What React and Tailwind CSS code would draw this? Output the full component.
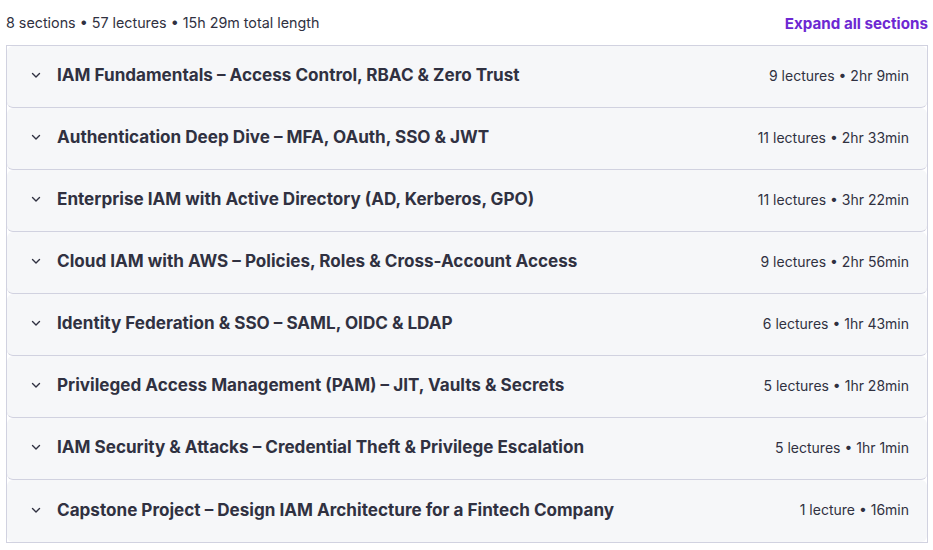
const sections = [
  { title: "IAM Fundamentals – Access Control, RBAC & Zero Trust", meta: "9 lectures • 2hr 9min" },
  { title: "Authentication Deep Dive – MFA, OAuth, SSO & JWT", meta: "11 lectures • 2hr 33min" },
  { title: "Enterprise IAM with Active Directory (AD, Kerberos, GPO)", meta: "11 lectures • 3hr 22min" },
  { title: "Cloud IAM with AWS – Policies, Roles & Cross-Account Access", meta: "9 lectures • 2hr 56min" },
  { title: "Identity Federation & SSO – SAML, OIDC & LDAP", meta: "6 lectures • 1hr 43min" },
  { title: "Privileged Access Management (PAM) – JIT, Vaults & Secrets", meta: "5 lectures • 1hr 28min" },
  { title: "IAM Security & Attacks – Credential Theft & Privilege Escalation", meta: "5 lectures • 1hr 1min" },
  { title: "Capstone Project – Design IAM Architecture for a Fintech Company", meta: "1 lecture • 16min" },
];

function Chevron() {
  return (
    <svg width="12" height="12" viewBox="0 0 12 12" fill="none" className="shrink-0">
      <path d="M2.5 4.5 6 8l3.5-3.5" stroke="#303141" strokeWidth="1.4" strokeLinecap="round" strokeLinejoin="round" />
    </svg>
  );
}

export default function App() {
  return (
    <div className="w-[933px] h-[550px] bg-white text-[#303141] font-['Inter','Noto_Sans',sans-serif]">
      <div className="flex items-center justify-between pl-[6px] pr-[5px] h-[45px]">
        <span className="text-[14.3px] text-[#303141]">8 sections • 57 lectures • 15h 29m total length</span>
        <button className="pt-[4px] text-[15.2px] font-bold text-[#6d28d2]">Expand all sections</button>
      </div>

      <div className="ml-[6px] w-[922px] border border-[#d1d2e0]">
        {sections.map((s, i) => (
          <div
            key={i}
            className={`h-[62px] bg-[#f6f7f9] rounded-[6px] flex items-center pl-[23px] pr-[18px] pb-[3px] ${
              i < sections.length - 1 ? "border-b border-[#d1d2e0]" : ""
            }`}
          >
            <Chevron />
            <span className="ml-[15px] text-[17.1px] font-bold">{s.title}</span>
            <span className="ml-auto text-[14px] text-[#303141]">{s.meta}</span>
          </div>
        ))}
      </div>
    </div>
  );
}
